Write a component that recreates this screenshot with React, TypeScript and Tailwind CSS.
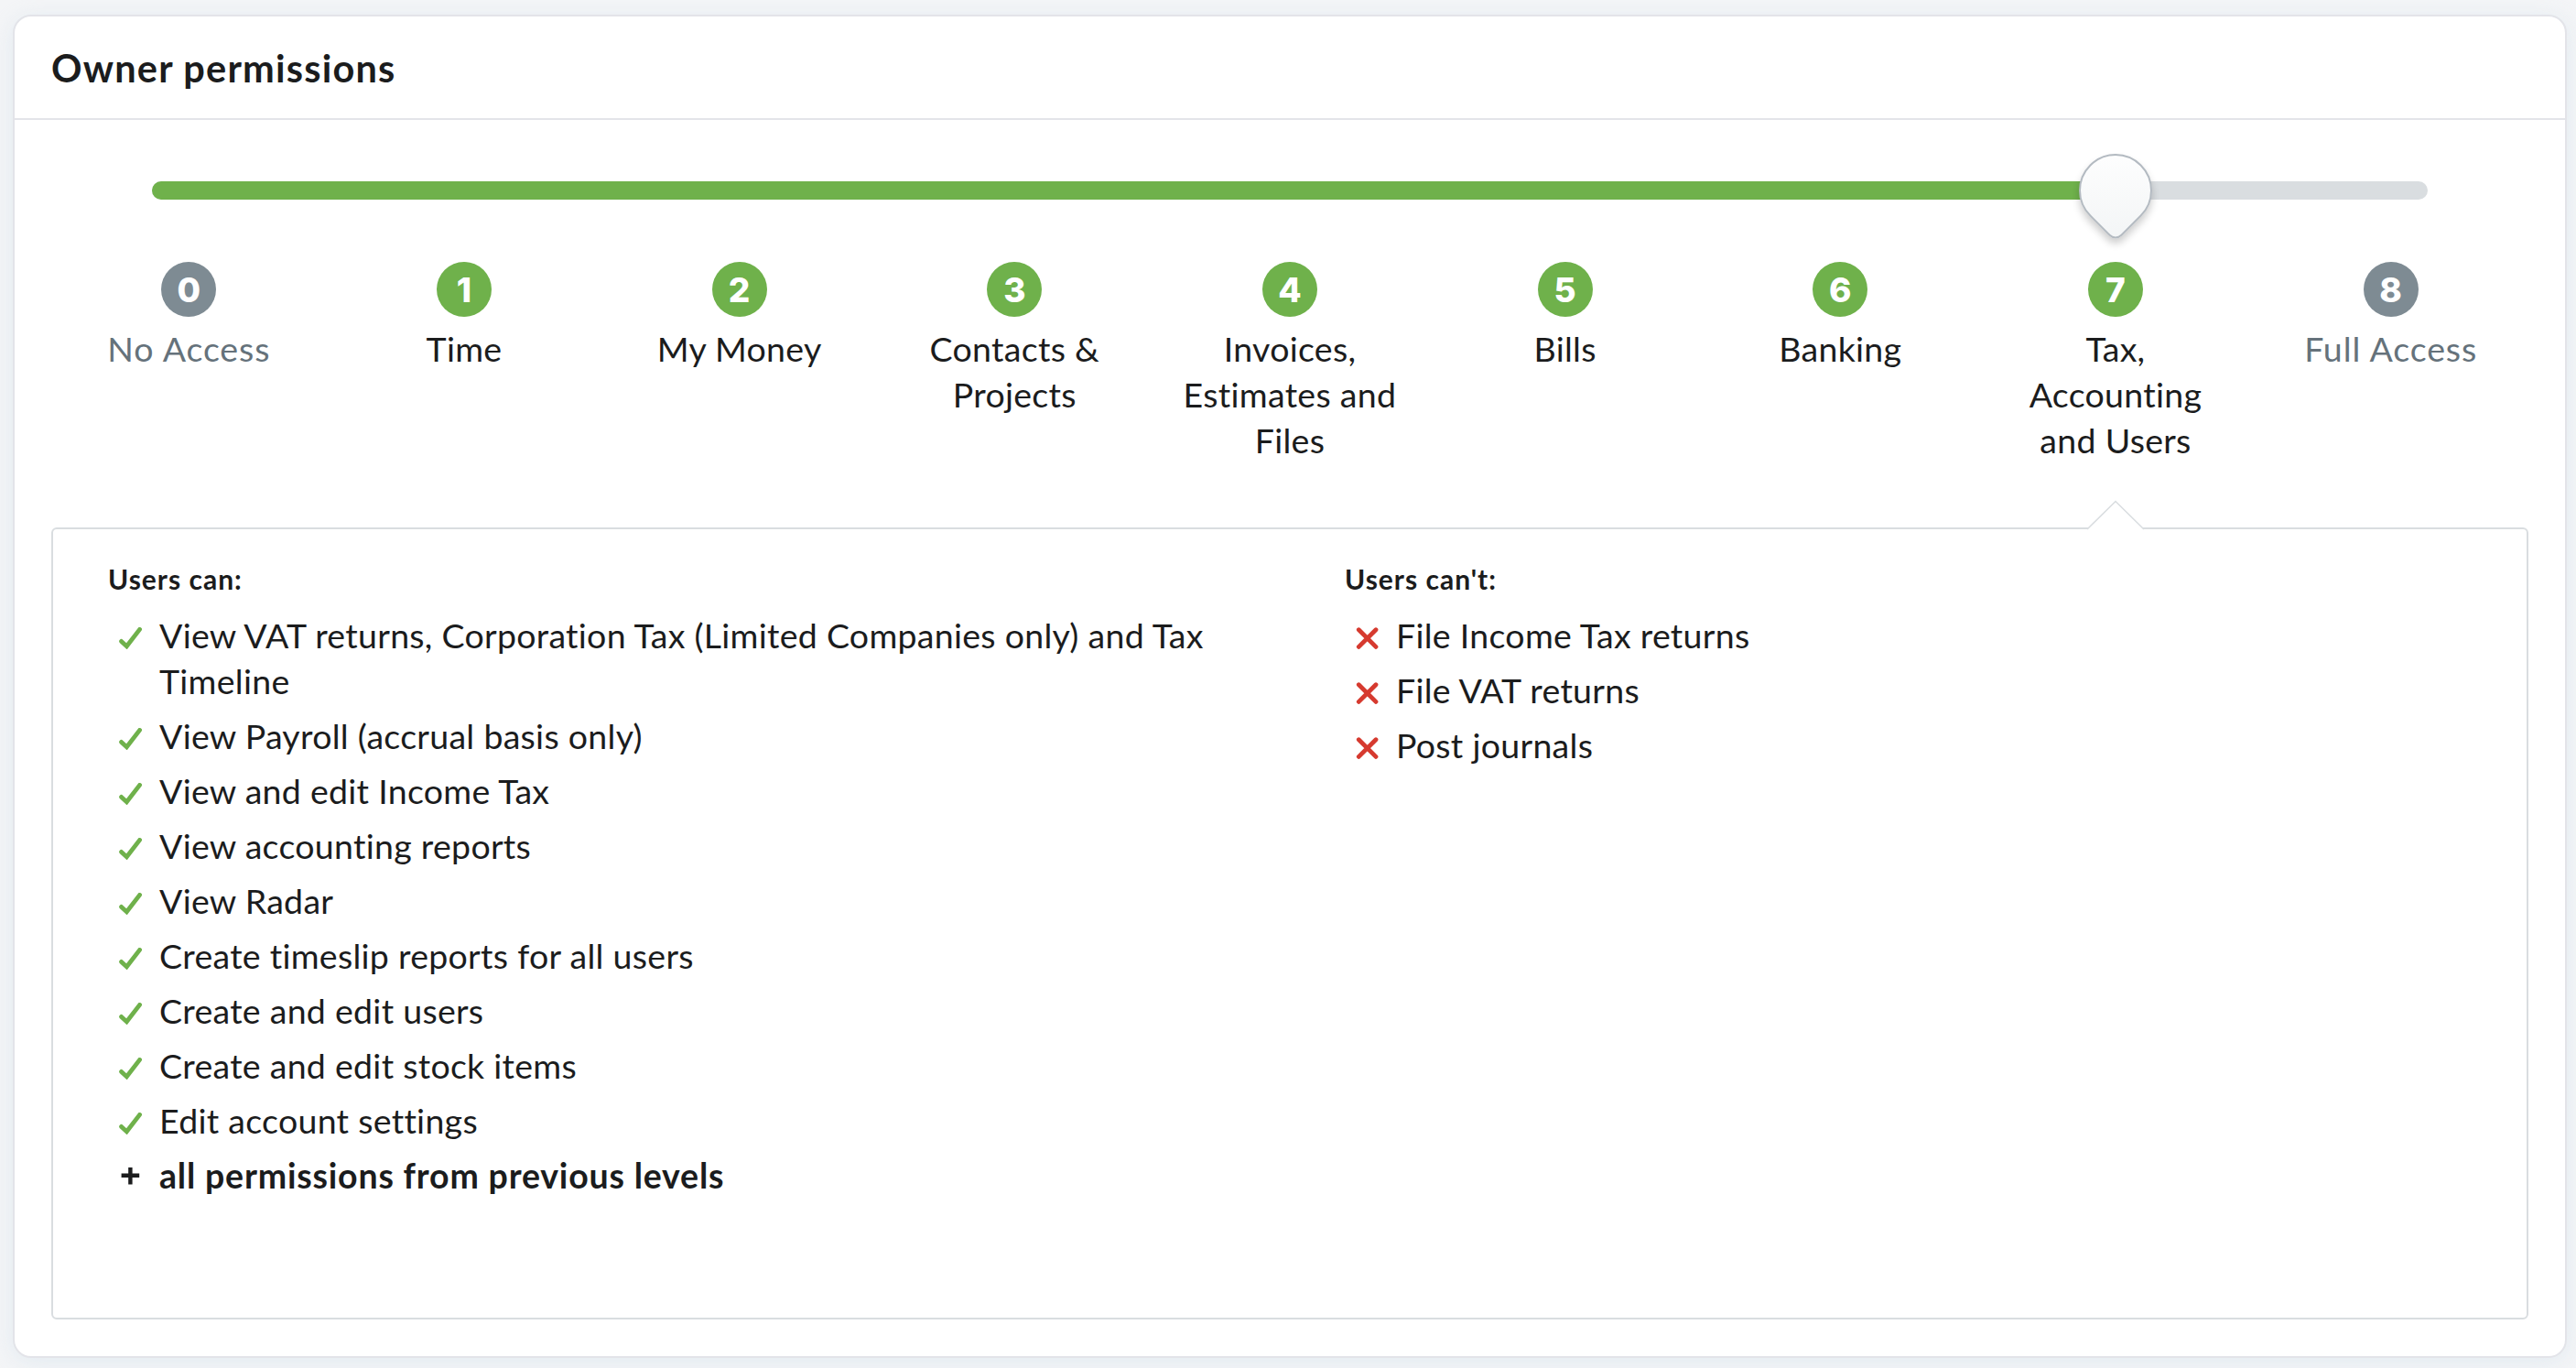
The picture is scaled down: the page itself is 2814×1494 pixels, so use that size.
import { useState } from "react";
import clsx from "clsx";

type Level = {
  name: string;
  muted?: boolean;
};

const levels: Level[] = [
  { name: "No Access", muted: true },
  { name: "Time" },
  { name: "My Money" },
  { name: "Contacts & Projects" },
  { name: "Invoices, Estimates and Files" },
  { name: "Bills" },
  { name: "Banking" },
  { name: "Tax, Accounting and Users" },
  { name: "Full Access", muted: true },
];

const allowed = [
  "View VAT returns, Corporation Tax (Limited Companies only) and Tax Timeline",
  "View Payroll (accrual basis only)",
  "View and edit Income Tax",
  "View accounting reports",
  "View Radar",
  "Create timeslip reports for all users",
  "Create and edit users",
  "Create and edit stock items",
  "Edit account settings",
];

const denied = ["File Income Tax returns", "File VAT returns", "Post journals"];

function CheckIcon() {
  return (
    <svg viewBox="0 0 26 24" className="h-6 w-[26px]" fill="none">
      <path
        d="M2.6 15.4 8.4 20.8 22.6 2.4"
        stroke="#6fb14b"
        strokeWidth="4.8"
        strokeLinecap="round"
        strokeLinejoin="miter"
      />
    </svg>
  );
}

function CrossIcon() {
  return (
    <svg viewBox="0 0 26 24" className="h-6 w-[26px]" fill="none">
      <path
        d="M3.3 2.7 22 21.4M22 2.7 3.3 21.4"
        stroke="#d63a2f"
        strokeWidth="4.8"
        strokeLinecap="round"
      />
    </svg>
  );
}

function PlusIcon() {
  return (
    <svg viewBox="0 0 26 24" className="h-6 w-[26px]" fill="none">
      <path d="M12.4-1V18.4M2.6 8.7H22.2" stroke="#1b1c1d" strokeWidth="4.4" overflow="visible" />
    </svg>
  );
}

function Item({
  icon,
  children,
  bold,
}: {
  icon: React.ReactNode;
  children: React.ReactNode;
  bold?: boolean;
}) {
  return (
    <li className="flex">
      <span className="w-14 shrink-0 pt-4 pl-3">{icon}</span>
      <span
        className={clsx(
          "text-[37.5px] leading-[50px]",
          bold ? "font-bold tracking-[0.8px]" : "tracking-[0.28px]"
        )}
      >
        {children}
      </span>
    </li>
  );
}

function Slider({ value, max }: { value: number; max: number }) {
  // stops sit in the middle of each column, the track is inset by 110px
  const position = `calc((100% + 220px) * ${(value + 0.5) / (max + 1)} - 110px)`;

  return (
    <div className="relative mx-[110px] h-5 rounded-[10px] bg-[#d9dde0]">
      <div className="h-5 rounded-l-[10px] bg-[#6fb14b]" style={{ width: position }} />
      <div
        className="absolute -top-[30px] -ml-10 size-20 rotate-45 rounded-[40px] rounded-br-[10px] border-2 border-[#b3bac1] bg-linear-to-br from-white to-[#f3f5f6] shadow-[4px_4px_8px_rgba(0,0,0,0.2)]"
        style={{ left: position }}
      />
    </div>
  );
}

export default function App() {
  const [level] = useState(7);

  return (
    <div className="h-[1494px] w-[2814px] overflow-hidden bg-[#f4f5f7] pt-4 pr-[10px] pb-[11px] pl-[14px] font-['Lato',sans-serif] text-[#1b1c1d]">
      <section className="flex h-full flex-col rounded-[20px] border-2 border-[#e3e4e9] bg-white shadow-[0_4px_24px_rgba(205,222,232,0.45)]">
        <header className="flex h-[113px] items-center border-b-2 border-[#e3e4e9] px-10">
          <h1 className="text-[41.5px] leading-[50px] font-bold tracking-[1.2px]">
            Owner permissions
          </h1>
        </header>

        <div className="px-10 pt-[67px]">
          <Slider value={level} max={levels.length - 1} />

          <ol className="mt-[68px] grid h-[290px] grid-cols-9">
            {levels.map((l, i) => (
              <li key={l.name} className="flex flex-col items-center">
                <span
                  className={clsx(
                    "flex size-15 items-center justify-center rounded-full font-['Inter',sans-serif] text-[37px] leading-none font-extrabold text-white",
                    l.muted ? "bg-[#7e8b93]" : "bg-[#6fb14b]"
                  )}
                >
                  {i}
                </span>
                <span
                  className={clsx(
                    "mt-[10px] w-[240px] text-center text-[37.5px] leading-[50px]",
                    l.muted ? "tracking-[0.9px] text-[#65727b]" : "tracking-[0.3px]"
                  )}
                >
                  {l.name}
                </span>
              </li>
            ))}
          </ol>

          <div className="relative grid h-[865px] grid-cols-2 rounded-[6px] border-2 border-[#d9dde0] pt-[34px]">
            <svg
              viewBox="0 0 62 34"
              className="absolute -top-8 -ml-[30px] h-[34px] w-[62px]"
              style={{ left: `${((level + 0.5) / levels.length) * 100}%` }}
            >
              <path d="M0 34V32.5L31 1.5 62 32.5V34Z" fill="#fff" />
              <path d="M0 32 31 1.5 62 32" fill="none" stroke="#d9dde0" strokeWidth="1.6" />
            </svg>

            <div className="pl-15">
              <h2 className="text-[30px] leading-10 font-bold tracking-[1px]">Users can:</h2>
              <ul className="mt-[17px] flex flex-col gap-[10px]">
                {allowed.map((text) => (
                  <Item key={text} icon={<CheckIcon />}>
                    {text}
                  </Item>
                ))}
                <Item icon={<PlusIcon />} bold>
                  all permissions from previous levels
                </Item>
              </ul>
            </div>

            <div className="pl-15">
              <h2 className="text-[30px] leading-10 font-bold tracking-[1px]">Users can't:</h2>
              <ul className="mt-[17px] flex flex-col gap-[10px]">
                {denied.map((text) => (
                  <Item key={text} icon={<CrossIcon />}>
                    {text}
                  </Item>
                ))}
              </ul>
            </div>
          </div>
        </div>
      </section>
    </div>
  );
}
